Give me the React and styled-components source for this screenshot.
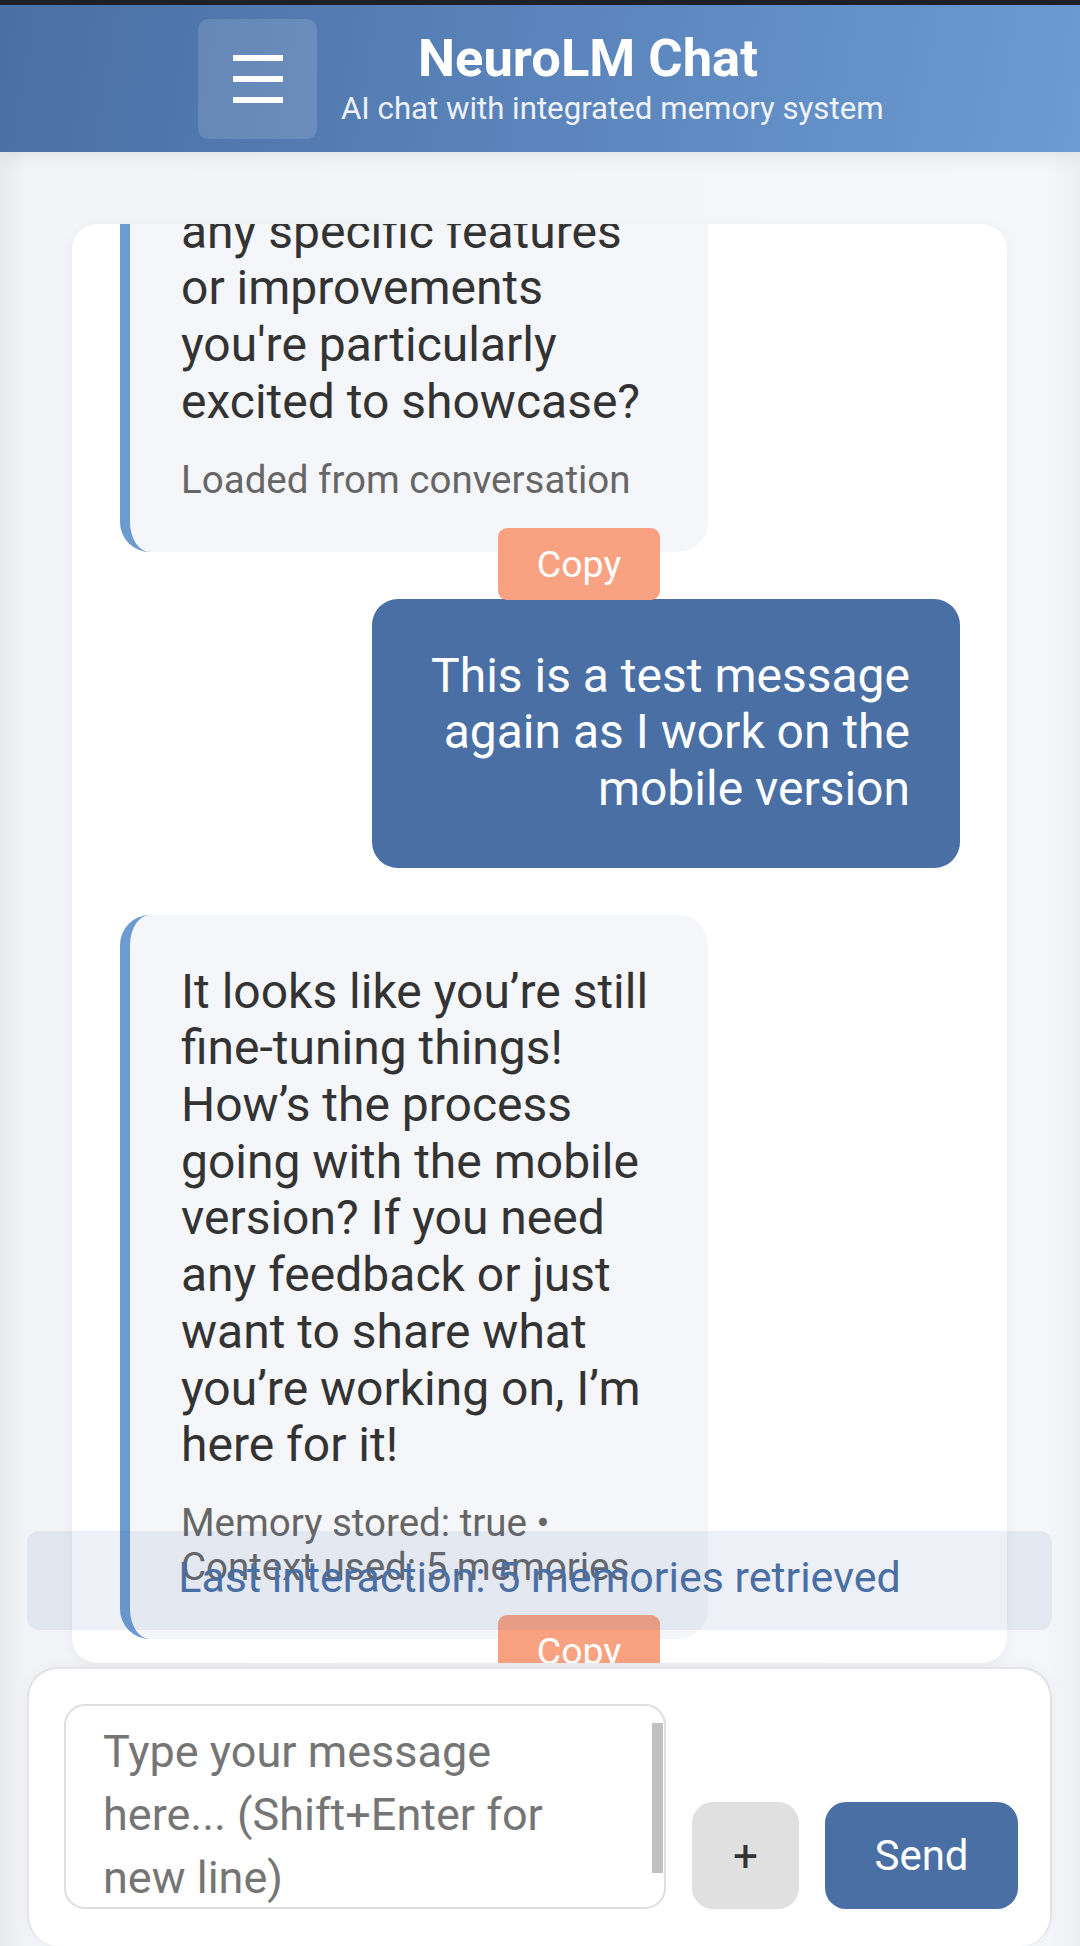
import React from 'react';
import styled, { createGlobalStyle } from 'styled-components';

//Colors
const blue = '#4a6fa5';
const lightBlue = '#6b9bd1';
const salmon = '#f9a282';

const messages = [
  {
    role: 'assistant',
    text: "The mobile layout is looking great in the latest build. Are there any specific features or improvements you're particularly excited to showcase?",
    meta: 'Loaded from conversation',
  },
  {
    role: 'user',
    text: 'This is a test message again as I work on the mobile version',
  },
  {
    role: 'assistant',
    text: 'It looks like you’re still fine-tuning things! How’s the process going with the mobile version? If you need any feedback or just want to share what you’re working on, I’m here for it!',
    meta: 'Memory stored: true • Context used: 5 memories',
  },
];

const GlobalStyle = createGlobalStyle`
  html, body {
    margin: 0;
    padding: 0;
  }
  body {
    font-family: Roboto, "Noto Sans", "Liberation Sans", sans-serif;
    background: #f4f5f8;
  }
  * {
    box-sizing: border-box;
  }
`;

//Main component
export default function App() {
  return (
    <Shell>
      <GlobalStyle />
      <SystemBar />
      <Header>
        <MenuButton aria-label="Menu">
          <svg width="50" height="48" viewBox="0 0 50 48">
            <rect x="0" y="0" width="50" height="6" fill="#fff" />
            <rect x="0" y="21" width="50" height="6" fill="#fff" />
            <rect x="0" y="42" width="50" height="6" fill="#fff" />
          </svg>
        </MenuButton>
        <TitleBlock>
          <Title>NeuroLM Chat</Title>
          <Subtitle>AI chat with integrated memory system</Subtitle>
        </TitleBlock>
      </Header>

      <ChatCard>
        {messages.map((m, i) =>
          m.role === 'user' ? (
            <UserBubble key={i}>{m.text}</UserBubble>
          ) : (
            <AssistantBubble key={i}>
              {m.text}
              <Meta>{m.meta}</Meta>
              <CopyButton>Copy</CopyButton>
            </AssistantBubble>
          )
        )}
      </ChatCard>

      <Composer>
        <StatusBar>Last interaction: 5 memories retrieved</StatusBar>
        <InputWrap>
          <MessageInput placeholder="Type your message here... (Shift+Enter for new line)" />
        </InputWrap>
        <ActionButton $variant="plain">+</ActionButton>
        <ActionButton $variant="primary">Send</ActionButton>
      </Composer>
    </Shell>
  );
}

const Shell = styled.div`
  height: 100vh;
  display: flex;
  flex-direction: column;
  background: linear-gradient(90deg, #e7e9ed 0, #f3f4f7 26px, #f5f6f9 calc(100% - 30px), #eceef1 100%);
  overflow: hidden;
`;

const SystemBar = styled.div`
  flex-shrink: 0;
  height: 5px;
  background: #1e2128;
`;

const Header = styled.header`
  flex-shrink: 0;
  position: relative;
  z-index: 1;
  height: 147px;
  display: flex;
  align-items: center;
  gap: 24px;
  padding-left: 198px;
  background: linear-gradient(100deg, #4a6fa5 0%, #5a84bb 50%, #6b9bd1 100%);
  box-shadow: 0 4px 18px rgba(0, 0, 0, 0.08);
`;

const MenuButton = styled.button`
  width: 119px;
  height: 120px;
  border: none;
  border-radius: 10px;
  background: rgba(255, 255, 255, 0.13);
  display: flex;
  align-items: center;
  justify-content: center;
  padding: 0;
`;

const TitleBlock = styled.div`
  width: 494px;
  text-align: center;
  color: #fff;
  margin-top: -2px;
`;

const Title = styled.h1`
  margin: 0;
  font-size: 52.5px;
  font-weight: 700;
  line-height: 1.2;
`;

const Subtitle = styled.p`
  margin: 0;
  font-size: 31.2px;
  line-height: 1.2;
  white-space: nowrap;
  opacity: 0.9;
`;

const ChatCard = styled.main`
  flex: 1;
  min-height: 0;
  margin: 72px 73px 4px 72px;
  padding: 0 47px 24px 48px;
  background: #fff;
  border-radius: 25px;
  box-shadow: 0 2px 12px rgba(0, 0, 0, 0.05);
  overflow: clip;
  display: flex;
  flex-direction: column;
  justify-content: flex-end;
  gap: 47px;
`;

const Bubble = styled.div`
  flex-shrink: 0;
  max-width: 70%;
  font-size: 48px;
  line-height: 56.7px;
`;

const AssistantBubble = styled(Bubble)`
  position: relative;
  align-self: flex-start;
  width: 70%;
  padding: 49px 49px 50px 51px;
  background: #f5f6fa;
  color: #333;
  border-left: 10px solid ${lightBlue};
  border-radius: 30px;
`;

const UserBubble = styled(Bubble)`
  align-self: flex-end;
  width: 70%;
  padding: 49px 50px 50px 49px;
  background: ${blue};
  color: #fff;
  text-align: right;
  border-radius: 26px;
`;

const Meta = styled.div`
  margin-top: 27px;
  font-size: 38.5px;
  line-height: 44px;
  color: #666;
`;

const CopyButton = styled.button`
  position: absolute;
  right: 48px;
  bottom: -48px;
  width: 162px;
  height: 72px;
  border: none;
  border-radius: 9px;
  background: ${salmon};
  color: #fff;
  font-family: inherit;
  font-size: 37.5px;
  padding: 0;
`;

const Composer = styled.footer`
  flex-shrink: 0;
  position: relative;
  height: 279px;
  margin: 0 28px 0 27px;
  padding: 35px 33px 35px 35px;
  background: #fff;
  border: 2px solid #e4e4e4;
  border-bottom: none;
  border-radius: 31px;
  box-shadow: 0 -2px 14px rgba(0, 0, 0, 0.04);
  display: flex;
  align-items: flex-end;
  gap: 26px;
`;

const StatusBar = styled.div`
  position: absolute;
  left: -2px;
  right: -2px;
  bottom: calc(100% + 39px);
  height: 99px;
  padding-bottom: 7px;
  display: flex;
  align-items: center;
  justify-content: center;
  border-radius: 12px;
  background: rgba(74, 111, 165, 0.1);
  color: ${blue};
  font-size: 43px;
`;

const InputWrap = styled.div`
  position: relative;
  flex: none;
  width: 602px;
  height: 205px;
  margin-bottom: 2px;

  &::after {
    content: '';
    position: absolute;
    top: 19px;
    right: 3px;
    width: 11px;
    height: 150px;
    background: #c1c1c1;
  }
`;

const MessageInput = styled.textarea`
  width: 100%;
  height: 100%;
  resize: none;
  overflow: hidden;
  border: 2px solid #dedede;
  border-radius: 21px;
  padding: 14px 40px 0 37px;
  font-family: inherit;
  font-size: 45px;
  line-height: 63px;
  color: #333;
  background: #fff;
  outline: none;

  &::placeholder {
    color: #757575;
  }
`;

const ActionButton = styled.button`
  flex: none;
  height: 107px;
  margin-bottom: 2px;
  width: ${(p) => (p.$variant === 'primary' ? '193px' : '107px')};
  border: none;
  border-radius: 21px;
  background: ${(p) => (p.$variant === 'primary' ? blue : '#e0e0e0')};
  color: ${(p) => (p.$variant === 'primary' ? '#fff' : '#333')};
  font-family: inherit;
  font-size: ${(p) => (p.$variant === 'primary' ? '42px' : '44px')};
  padding: 0;
`;
